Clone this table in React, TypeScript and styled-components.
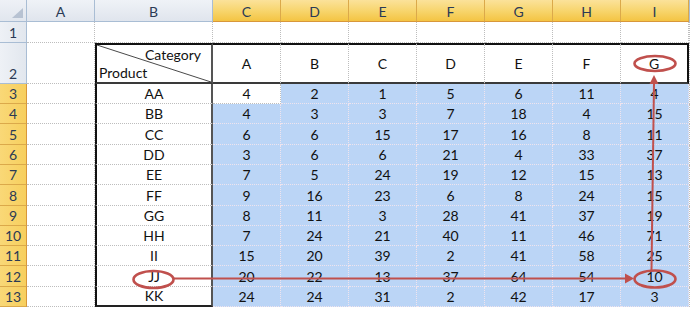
import React from "react";
import styled, { createGlobalStyle, css } from "styled-components";

const GlobalStyle = createGlobalStyle`
  html, body { margin: 0; padding: 0; background: #ffffff; }
  body { font-family: "Lato", "Open Sans", "Liberation Sans", sans-serif; }
  * { box-sizing: border-box; }
`;

const ROW_HEIGHTS = [20, 20, 21, 20, 20, 21, 20, 20, 20, 21, 20];

const Page = styled.div`
  position: relative;
  width: 690px;
  height: 316px;
  overflow: hidden;
  background: #ffffff;
`;

const Sheet = styled.div`
  display: grid;
  grid-template-columns: 27px 68px 118px repeat(7, 68px) 1fr;
  grid-template-rows: 22px 21px 41px ${ROW_HEIGHTS.map((h) => `${h}px`).join(" ")} 1fr;
  width: 690px;
  height: 316px;
  font-size: 14px;
  color: #111;
`;

const headerBase = css`
  display: flex;
  justify-content: center;
  font-size: 14px;
  color: #2b3a55;
  border-right: 1px solid #a9bdd4;
  border-bottom: 1px solid #a9bdd4;
`;

const Corner = styled.div`
  ${headerBase};
  position: relative;
  background: linear-gradient(#eef1f6, #e1e6ee);
  &::after {
    content: "";
    position: absolute;
    right: 3px;
    bottom: 3px;
    width: 0;
    height: 0;
    border-left: 11px solid transparent;
    border-bottom: 10px solid #b7c2d2;
  }
`;

const ColHeader = styled.div<{ $active?: boolean }>`
  ${headerBase};
  align-items: center;
  padding-top: 1px;
  background: ${(p) =>
    p.$active
      ? "linear-gradient(#fbe29a, #f7d46a 55%, #f4c443)"
      : "linear-gradient(#eff2f7, #e0e5ed)"};
  border-right-color: ${(p) => (p.$active ? "#dba94a" : "#a9bdd4")};
  border-bottom-color: ${(p) => (p.$active ? "#d8973a" : "#a9bdd4")};
`;

const RowHeader = styled.div<{ $active?: boolean }>`
  ${headerBase};
  align-items: flex-end;
  line-height: 17px;
  padding-bottom: 1px;
  background: ${(p) =>
    p.$active ? "linear-gradient(90deg, #f9d877, #f7cf5e)" : "linear-gradient(90deg, #eef1f6, #e2e7ee)"};
  border-right-color: ${(p) => (p.$active ? "#d8973a" : "#a9bdd4")};
  border-bottom-color: ${(p) => (p.$active ? "#dba94a" : "#a9bdd4")};
`;

type Edge = string | undefined;

const Cell = styled.div<{
  $sel?: boolean;
  $mid?: boolean;
  $t?: Edge;
  $l?: Edge;
  $r?: Edge;
  $b?: Edge;
}>`
  display: flex;
  justify-content: center;
  align-items: ${(p) => (p.$mid ? "center" : "flex-end")};
  line-height: 17px;
  padding-bottom: ${(p) => (p.$mid ? "0" : "1px")};
  background: ${(p) => (p.$sel ? "#bbd5f6" : "#ffffff")};
  color: #111;
  border-right: 1px dotted ${(p) => (p.$sel ? "#efe4ee" : "#bdbdbd")};
  border-bottom: 1px dotted ${(p) => (p.$sel ? "#efe4ee" : "#bdbdbd")};
  ${(p) => p.$t && `border-top: 2px solid ${p.$t};`}
  ${(p) => p.$l && `border-left: 2px solid ${p.$l};`}
  ${(p) => p.$r && `border-right: 2px solid ${p.$r};`}
  ${(p) => p.$b && `border-bottom: 2px solid ${p.$b};`}
`;

const DiagonalCell = styled.div`
  position: relative;
  display: flex;
  flex-direction: column;
  justify-content: space-between;
  padding: 1px 10px 0 2px;
  line-height: 18px;
  border-top: 2px solid #111;
  border-left: 2px solid #111;
  border-right: 2px solid #555;
  border-bottom: 2px solid #3a3a3a;
`;

const DiagTop = styled.span`
  align-self: flex-end;
`;

const DiagBottom = styled.span`
  align-self: flex-start;
`;

const DiagLine = styled.svg`
  position: absolute;
  inset: 0;
  width: 100%;
  height: 100%;
  pointer-events: none;
`;

const Overlay = styled.svg`
  position: absolute;
  left: 0;
  top: 0;
  width: 690px;
  height: 316px;
  pointer-events: none;
`;

const COLS = ["A", "B", "C", "D", "E", "F", "G", "H", "I"];
const CATS = ["A", "B", "C", "D", "E", "F", "G"];

const DATA: [string, number[]][] = [
  ["AA", [4, 2, 1, 5, 6, 11, 4]],
  ["BB", [4, 3, 3, 7, 18, 4, 15]],
  ["CC", [6, 6, 15, 17, 16, 8, 11]],
  ["DD", [3, 6, 6, 21, 4, 33, 37]],
  ["EE", [7, 5, 24, 19, 12, 15, 13]],
  ["FF", [9, 16, 23, 6, 8, 24, 15]],
  ["GG", [8, 11, 3, 28, 41, 37, 19]],
  ["HH", [7, 24, 21, 40, 11, 46, 71]],
  ["II", [15, 20, 39, 2, 41, 58, 25]],
  ["JJ", [20, 22, 13, 37, 64, 54, 10]],
  ["KK", [24, 24, 31, 2, 42, 17, 3]],
];

const RED = "#c0504d";

export default function App() {
  return (
    <Page>
      <GlobalStyle />
      <Sheet>
        {/* column header row */}
        <Corner />
        {COLS.map((c, i) => (
          <ColHeader key={c} $active={i >= 2}>
            {c}
          </ColHeader>
        ))}
        <ColHeader />

        {/* row 1 */}
        <RowHeader>1</RowHeader>
        {COLS.map((c) => (
          <Cell key={`r1${c}`} />
        ))}
        <Cell />

        {/* row 2 */}
        <RowHeader>2</RowHeader>
        <Cell />
        <DiagonalCell>
          <DiagLine viewBox="0 0 100 100" preserveAspectRatio="none">
            <line x1="0" y1="0" x2="100" y2="100" stroke="#4a4a4a" strokeWidth="1" vectorEffect="non-scaling-stroke" />
          </DiagLine>
          <DiagTop>Category</DiagTop>
          <DiagBottom>Product</DiagBottom>
        </DiagonalCell>
        {CATS.map((c, i) => (
          <Cell key={`r2${c}`} $mid $t="#111" $b="#3a3a3a" $r={i === 6 ? "#111" : undefined}>
            {c}
          </Cell>
        ))}
        <Cell />

        {/* data rows */}
        {DATA.map(([name, vals], ri) => {
          const last = ri === DATA.length - 1;
          return (
            <React.Fragment key={name}>
              <RowHeader $active>{ri + 3}</RowHeader>
              <Cell />
              <Cell $l="#111" $r="#555" $b={last ? "#222" : undefined}>
                {name}
              </Cell>
              {vals.map((v, ci) => (
                <Cell key={ci} $sel={!(ri === 0 && ci === 0)}>
                  {v}
                </Cell>
              ))}
              <Cell />
            </React.Fragment>
          );
        })}
      </Sheet>

      <Overlay viewBox="0 0 690 316">
        <ellipse cx="655" cy="63.5" rx="20.5" ry="7.5" fill="none" stroke={RED} strokeWidth="2.6" />
        <ellipse cx="153.5" cy="279.5" rx="20" ry="8.5" fill="none" stroke={RED} strokeWidth="2.6" />
        <ellipse cx="655" cy="279" rx="20.5" ry="8.5" fill="none" stroke={RED} strokeWidth="2.6" />
        {/* horizontal arrow JJ -> 10 */}
        <line x1="174" y1="278.5" x2="626" y2="278.5" stroke={RED} strokeWidth="2" />
        <polygon points="625,273.5 634,278.5 625,283.5" fill={RED} />
        {/* vertical arrow 10 -> G */}
        <line x1="651.5" y1="270" x2="654" y2="83" stroke={RED} strokeWidth="2" />
        <polygon points="649.5,84 654,75 658.5,84" fill={RED} />
      </Overlay>
    </Page>
  );
}
